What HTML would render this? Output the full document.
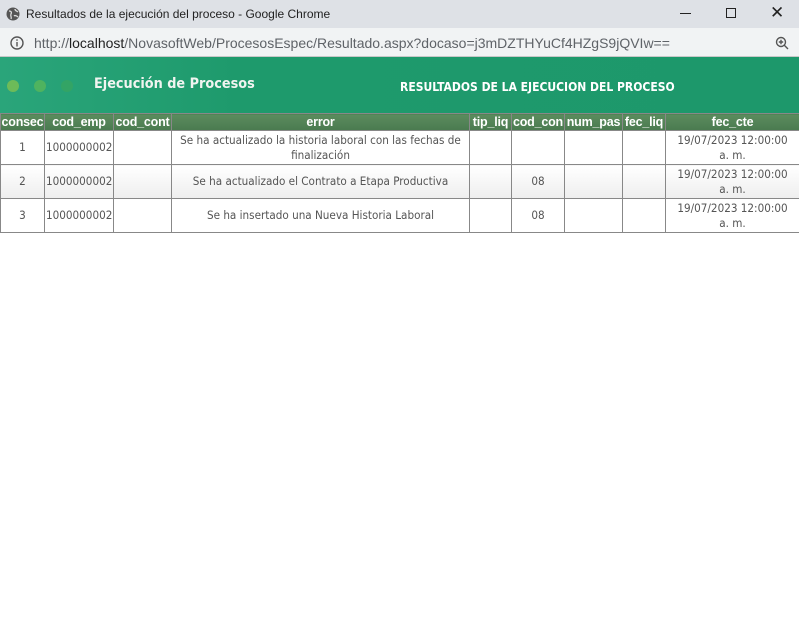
<!DOCTYPE html>
<html><head><style>
*{margin:0;padding:0;box-sizing:border-box}
body{width:799px;height:637px;background:#fff;font-family:"Liberation Sans",sans-serif;overflow:hidden;position:relative}
.title{position:absolute;left:0;top:0;width:799px;height:28px;background:#dee1e6;font-size:12px;color:#222}
.addr{position:absolute;left:0;top:28px;width:799px;height:29px;background:#f1f3f4;border-bottom:1px solid #c8c8c8;font-size:14px;color:#5f6368}
.banner{position:absolute;left:0;top:57px;width:799px;height:56px;background:linear-gradient(90deg,#2aa57a 0,#1e9a6c 30%,#1d986b 100%)}
.dot{position:absolute;top:80px;width:12px;height:12px;border-radius:50%}
table{position:absolute;left:0;top:113px;border-collapse:collapse;table-layout:fixed;width:799px;font-family:"DejaVu Sans Condensed","DejaVu Sans",sans-serif;font-size:11.6px;color:#555}
th{background:linear-gradient(#5b8c5e,#4a7a4f);color:#fff;font-family:"Liberation Sans",sans-serif;font-weight:bold;font-size:12.5px;height:17px;border:1px solid #888;padding:0;line-height:15px;overflow:hidden;white-space:nowrap;letter-spacing:-0.2px}
td{border:1px solid #888;text-align:center;height:34px;line-height:15px;padding:0 1px;overflow:hidden}
td.d{padding:0 8px}
tr.alt td{background:linear-gradient(#fff,#eee)}
</style></head><body>
<div class="title">
<svg style="position:absolute;left:6px;top:7px" width="14" height="14" viewBox="0 0 14 14"><circle cx="7" cy="7" r="6.5" fill="#555"/><path d="M3 4c2 0 3 1 2 3s1 3 0 5M9 2c0 2 2 2 3 3M8 9c1-1 3 0 4 1" stroke="#ddd" stroke-width="1.3" fill="none"/></svg>
<span style="position:absolute;left:26px;top:7px">Resultados de la ejecución del proceso - Google Chrome</span>
<div style="position:absolute;left:680px;top:13px;width:11px;height:1px;background:#222"></div>
<div style="position:absolute;left:726px;top:8px;width:10px;height:10px;border:1px solid #222"></div>
<span style="position:absolute;left:770px;top:3px;font-size:17px">✕</span>
</div>
<div class="addr">
<svg style="position:absolute;left:10px;top:8px" width="14" height="14" viewBox="0 0 14 14"><circle cx="7" cy="7" r="6" stroke="#555" stroke-width="1.4" fill="none"/><rect x="6.3" y="6" width="1.4" height="4.5" fill="#555"/><rect x="6.3" y="3.3" width="1.4" height="1.5" fill="#555"/></svg>
<span style="position:absolute;left:34px;top:7px">http://<span style="color:#222">localhost</span>/NovasoftWeb/ProcesosEspec/Resultado.aspx?docaso=j3mDZTHYuCf4HZgS9jQVIw==</span>
<svg style="position:absolute;left:775px;top:8px" width="14" height="14" viewBox="0 0 14 14"><circle cx="6" cy="6" r="4.5" stroke="#555" stroke-width="1.4" fill="none"/><path d="M9.3 9.3L13 13M6 3.8v4.4M3.8 6h4.4" stroke="#555" stroke-width="1.4"/></svg>
</div>
<div class="banner"></div>
<div class="dot" style="left:7px;background:#6dbb59"></div>
<div class="dot" style="left:34px;background:#4fb35f"></div>
<div class="dot" style="left:61px;background:#33a465"></div>
<div style="position:absolute;left:94px;top:76px;font-weight:bold;font-size:14.3px;font-family:'DejaVu Sans Condensed','DejaVu Sans',sans-serif;color:#f0f4f0">Ejecución de Procesos</div>
<div style="position:absolute;left:400px;top:80px;color:#fff;font-weight:bold;font-size:12px;font-family:'DejaVu Sans Condensed','DejaVu Sans',sans-serif">RESULTADOS DE LA EJECUCION DEL PROCESO</div>
<table>
<colgroup><col style="width:44px"><col style="width:69px"><col style="width:58px"><col style="width:298px"><col style="width:42px"><col style="width:53px"><col style="width:58px"><col style="width:43px"><col style="width:134px"></colgroup>
<tr><th>consec</th><th>cod_emp</th><th>cod_cont</th><th>error</th><th>tip_liq</th><th>cod_con</th><th>num_pas</th><th>fec_liq</th><th>fec_cte</th></tr>
<tr><td>1</td><td>1000000002</td><td></td><td>Se ha actualizado la historia laboral con las fechas de finalización</td><td></td><td></td><td></td><td></td><td class="d">19/07/2023 12:00:00 a. m.</td></tr>
<tr class="alt"><td>2</td><td>1000000002</td><td></td><td>Se ha actualizado el Contrato a Etapa Productiva</td><td></td><td>08</td><td></td><td></td><td class="d">19/07/2023 12:00:00 a. m.</td></tr>
<tr><td>3</td><td>1000000002</td><td></td><td>Se ha insertado una Nueva Historia Laboral</td><td></td><td>08</td><td></td><td></td><td class="d">19/07/2023 12:00:00 a. m.</td></tr>
</table>
</body></html>
